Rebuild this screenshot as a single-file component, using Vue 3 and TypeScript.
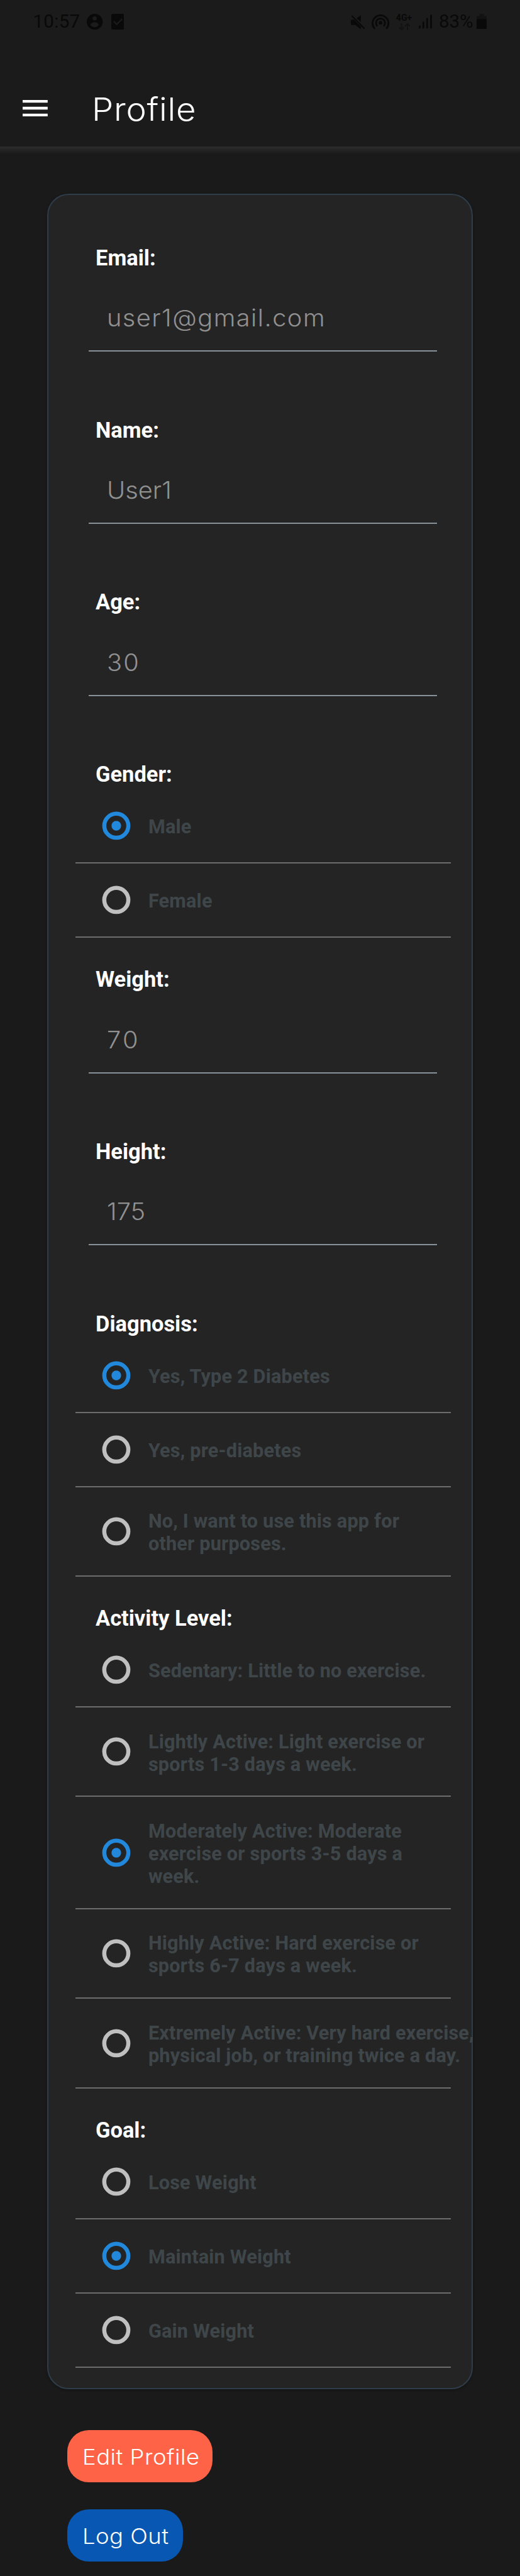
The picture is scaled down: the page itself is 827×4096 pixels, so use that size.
<script setup lang="ts">
interface TextField {
  kind: 'text'
  label: string
  value: string
  /** letter spacing of the value, in rem */
  tracking: number
}
interface ChoiceField {
  kind: 'choice'
  label: string
  options: string[]
  selected: number
}
type Field = TextField | ChoiceField

const fields: Field[] = [
  { kind: 'text', label: 'Email:', value: 'user1@gmail.com', tracking: 0.178 },
  { kind: 'text', label: 'Name:', value: 'User1', tracking: 0 },
  { kind: 'text', label: 'Age:', value: '30', tracking: 0.28 },
  { kind: 'choice', label: 'Gender:', options: ['Male', 'Female'], selected: 0 },
  { kind: 'text', label: 'Weight:', value: '70', tracking: 0.4 },
  { kind: 'text', label: 'Height:', value: '175', tracking: 0 },
  {
    kind: 'choice',
    label: 'Diagnosis:',
    options: ['Yes, Type 2 Diabetes', 'Yes, pre-diabetes', 'No, I want to use this app for\nother purposes.'],
    selected: 0,
  },
  {
    kind: 'choice',
    label: 'Activity Level:',
    options: [
      'Sedentary: Little to no exercise.',
      'Lightly Active: Light exercise or\nsports 1-3 days a week.',
      'Moderately Active: Moderate\nexercise or sports 3-5 days a\nweek.',
      'Highly Active: Hard exercise or\nsports 6-7 days a week.',
      'Extremely Active: Very hard exercise,\nphysical job, or training twice a day.',
    ],
    selected: 2,
  },
  { kind: 'choice', label: 'Goal:', options: ['Lose Weight', 'Maintain Weight', 'Gain Weight'], selected: 1 },
]
</script>

<template>
  <div class="screen">
    <header class="header">
      <div class="status">
        <span class="clock">10:57</span>
        <svg class="ic-account" viewBox="0 0 33 33">
          <path fill-rule="evenodd" d="M16.5 0a16.5 16.5 0 1 0 0 33a16.5 16.5 0 0 0 0-33ZM16.5 5.2a4.3 4.3 0 1 1 0 8.6a4.3 4.3 0 0 1 0-8.6ZM7.6 23c1-3.600 5-5.800 8.900-5.800s7.900 2.200 8.900 5.800c-2 3-5.200 4.900-8.900 4.900s-6.900-1.900-8.900-4.900Z" />
        </svg>
        <svg class="ic-task" viewBox="0 0 27 33">
          <rect width="27" height="33" rx="3.500" />
          <path class="cut" d="M5 15.500l6.300 6.300L22.500 10.800" />
        </svg>
        <span class="spacer"></span>
        <svg class="ic-mute" viewBox="0 0 30 30">
          <path d="M21 0v14.500L12.500 6.500ZM2.500 9.500h4L21 24v6L9.500 21H2.500Q0 21 0 18.500V12Q0 9.500 2.500 9.500Z" />
          <path class="stroke" d="M2.800 2.300L28 28" />
        </svg>
        <svg class="ic-hotspot" viewBox="0 0 37 33">
          <circle cx="18.500" cy="18.500" r="3.800" />
          <path class="stroke" d="M12 25.500a9.300 9.300 0 1 1 13 0M6.500 31a16.500 16.500 0 1 1 24 0" />
        </svg>
        <span class="network">
          <span class="network-type">4G+</span>
          <svg class="ic-arrows" viewBox="0 0 24 15">
            <path d="M6 0v13M1 8.500l5 5l5-5M18.300 14V1.500M13.300 6l5-5l5 5" />
          </svg>
        </span>
        <svg class="ic-signal" viewBox="0 0 28 30">
          <path d="M2 24.500v3M9.500 16.500v11M17.300 9v18.500M25.500 2.200v25.300" />
        </svg>
        <span class="percent">83%</span>
        <svg class="ic-battery" viewBox="0 0 21 32">
          <path class="empty" d="M6 0h9v4.500h4q2 0 2 2V12H0V6.500q0-2 2-2h4Z" />
          <path d="M0 11h21v18q0 3-3 3H3q-3 0-3-3Z" />
        </svg>
      </div>
      <div class="toolbar">
        <svg class="ic-menu" viewBox="0 0 52 34">
          <path d="M0 0h52v5.700H0ZM0 14.100h52v5.700H0ZM0 28.300h52V34H0Z" />
        </svg>
        <h1 class="title">Profile</h1>
      </div>
    </header>

    <main class="body">
      <section class="card">
        <div v-for="field in fields" :key="field.label" :class="field.kind">
          <div class="label">{{ field.label }}</div>
          <div v-if="field.kind === 'text'" class="value">
            <span class="value-text" :style="{ letterSpacing: field.tracking + 'rem' }">{{ field.value }}</span>
          </div>
          <template v-else>
            <div v-for="(option, i) in field.options" :key="option" class="option">
              <svg class="radio" :class="{ on: i === field.selected }" viewBox="0 0 60 60">
                <circle class="ring" cx="30" cy="30" r="25" />
                <circle v-if="i === field.selected" class="dot" cx="30" cy="30" r="10" />
              </svg>
              <span class="option-text">{{ option }}</span>
            </div>
          </template>
        </div>
      </section>

      <button class="btn edit" type="button"><span class="btn-text">Edit Profile</span></button>
      <button class="btn logout" type="button"><span class="btn-text">Log Out</span></button>
    </main>
  </div>
</template>

<style>
html {
  font-size: 7.658px;
  background: #1a1a1a;
}
</style>

<style scoped>
.screen {
  width: 100%;
  height: 4096px;
  overflow: hidden;
  background: #1a1a1a;
  font-size: 4rem;
  font-family: Roboto, 'Liberation Sans', sans-serif;
}
.header {
  height: 30.4rem;
  background: #1b1b1b;
}
.status {
  display: flex;
  align-items: flex-start;
  height: 9rem;
  padding: 2.87rem 6.9rem 0 6.85rem;
  box-sizing: border-box;
  color: #090909;
  fill: #090909;
}
.status svg {
  display: block;
  flex: none;
}
.spacer {
  flex: 1;
}
.clock,
.percent {
  font-size: 3.85rem;
  line-height: 3.3rem;
}
.clock {
  width: 11.23rem;
  letter-spacing: 0.04rem;
}
.percent {
  width: 7.85rem;
}
.stroke {
  fill: none;
  stroke: #090909;
  stroke-width: 3.6;
}
.ic-account {
  width: 3.3rem;
  height: 3.3rem;
}
.ic-task {
  width: 2.7rem;
  height: 3.3rem;
  margin-left: 1.7rem;
}
.cut {
  fill: none;
  stroke: #1b1b1b;
  stroke-width: 3;
}
.ic-mute {
  width: 2.95rem;
  height: 2.95rem;
  margin: 0.2rem 1.4rem 0 0;
}
.ic-mute .stroke {
  stroke-width: 2.8;
  stroke-linecap: round;
}
.ic-hotspot {
  width: 3.7rem;
  height: 3.3rem;
  margin-right: 1.4rem;
}
.network {
  width: 4.7rem;
}
.network-type {
  display: block;
  font-size: 1.85rem;
  font-weight: 700;
  line-height: 1.7rem;
}
.ic-arrows {
  width: 2.4rem;
  height: 1.5rem;
  margin: 0.25rem 0 0 0.5rem;
  fill: none;
  stroke: #121212;
  stroke-width: 2.4;
}
.ic-signal {
  width: 2.8rem;
  height: 3rem;
  margin: 0.15rem 1.4rem 0 0;
  stroke: #090909;
  stroke-width: 3.6;
  stroke-linecap: round;
}
.ic-battery {
  width: 2.1rem;
  height: 3.2rem;
}
.empty {
  fill: #121212;
}
.toolbar {
  display: flex;
  align-items: center;
  height: 27rem;
  padding-left: 4.68rem;
}
.ic-menu {
  width: 5.2rem;
  height: 3.4rem;
  fill: #fff;
}
.title {
  margin: 0.4rem 0 0 9.25rem;
  color: #fff;
  font-family: Inter, 'Open Sans', sans-serif;
  font-size: 6.6rem;
  font-weight: 300;
  line-height: 8rem;
  letter-spacing: 0.09rem;
  transform: scaleX(1.08);
  transform-origin: left;
}
.body {
  padding: 9.8rem 9.8rem 0;
  background: linear-gradient(#2d2d2d, #1a1a1a 1.5rem);
}
.card {
  box-sizing: border-box;
  height: 455.9rem;
  padding: 10.2rem 4.3rem 0 5.6rem;
  border: 2px solid #2f3d4b;
  border-radius: 4.5rem;
  background: #242424;
  box-shadow: 0 0.2rem 0.5rem rgba(0, 0, 0, 0.25);
}
.label {
  padding-left: 4.19rem;
  color: #fff;
  font-size: 4.5rem;
  font-weight: 700;
  line-height: 6rem;
}
.text {
  height: 35.75rem;
}
.value {
  margin: 5.94rem 2.9rem 0 2.8rem;
  padding: 0 0 3.18rem 3.8rem;
  border-bottom: 2px solid #87919a;
  color: #919191;
  font-family: Inter, 'Open Sans', sans-serif;
  font-size: 4.9rem;
  font-weight: 300;
  line-height: 7rem;
}
.value-text {
  display: block;
  width: max-content;
  transform: scaleX(1.06);
  transform-origin: left;
}
.choice {
  padding-bottom: 5.77rem;
}
.option {
  display: flex;
  align-items: center;
  box-sizing: border-box;
  min-height: 15.4rem;
  padding: 4.17rem 0 4.17rem 5.5rem;
  border-bottom: 2px solid #6d6d6d;
}
.radio {
  flex: none;
  width: 6rem;
  height: 6rem;
  margin-right: 3.65rem;
}
.ring {
  fill: none;
  stroke: #bfbfbf;
  stroke-width: 8.5;
}
.on .ring {
  stroke: #2288dc;
}
.dot {
  fill: #2288dc;
}
.option-text {
  width: 0;
  padding-top: 0.6rem;
  color: #3f464a;
  font-size: 4rem;
  font-weight: 700;
  line-height: 4.7rem;
  letter-spacing: 0.025rem;
  white-space: pre;
}
.btn {
  display: flex;
  align-items: center;
  box-sizing: border-box;
  height: 10.78rem;
  margin: 0 0 5.7rem 4.2rem;
  padding: 0.2rem 0 0 3.05rem;
  border: 0;
  border-radius: 4.5rem;
  color: #fff;
  font-family: Inter, 'Open Sans', sans-serif;
  font-size: 4.4rem;
  font-weight: 300;
}
.btn-text {
  flex: none;
  white-space: nowrap;
  letter-spacing: 0.06rem;
  transform: scaleX(1.08);
  transform-origin: left;
}
.edit {
  width: 30.2rem;
  margin-top: 8.5rem;
  background: #ff6347;
}
.logout {
  width: 24rem;
  background: #0857b3;
}
</style>
